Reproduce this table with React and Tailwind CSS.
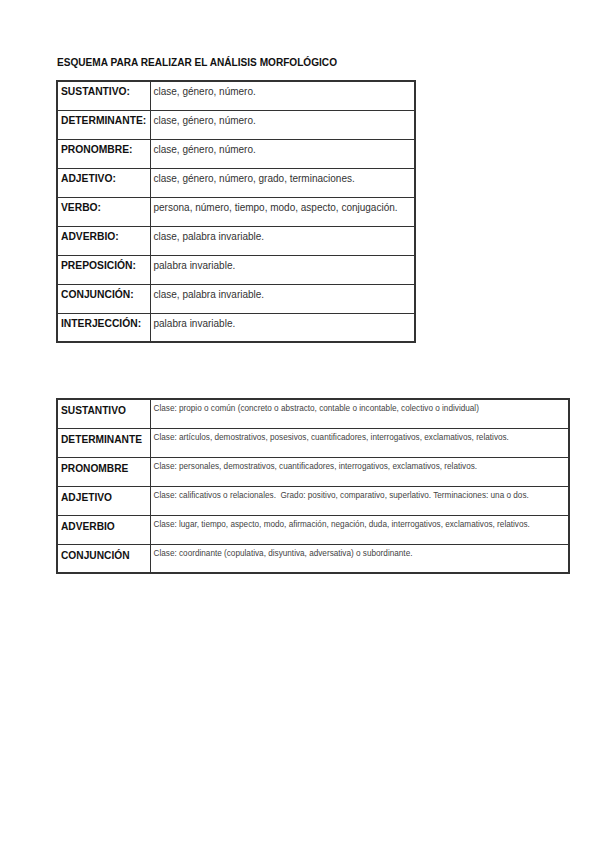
const FONT = { fontFamily: '"Liberation Sans", Arial, sans-serif' };

const SIMPLE = [
  ['SUSTANTIVO:', 'clase, género, número.'],
  ['DETERMINANTE:', 'clase, género, número.'],
  ['PRONOMBRE:', 'clase, género, número.'],
  ['ADJETIVO:', 'clase, género, número, grado, terminaciones.'],
  ['VERBO:', 'persona, número, tiempo, modo, aspecto, conjugación.'],
  ['ADVERBIO:', 'clase, palabra invariable.'],
  ['PREPOSICIÓN:', 'palabra invariable.'],
  ['CONJUNCIÓN:', 'clase, palabra invariable.'],
  ['INTERJECCIÓN:', 'palabra invariable.'],
];

const DETAIL = [
  ['SUSTANTIVO', 'Clase: propio o común (concreto o abstracto, contable o incontable, colectivo o individual)'],
  ['DETERMINANTE', 'Clase: artículos, demostrativos, posesivos, cuantificadores, interrogativos, exclamativos, relativos.'],
  ['PRONOMBRE', 'Clase: personales, demostrativos, cuantificadores, interrogativos, exclamativos, relativos.'],
  ['ADJETIVO', 'Clase: calificativos o relacionales.  Grado: positivo, comparativo, superlativo. Terminaciones: una o dos.'],
  ['ADVERBIO', 'Clase: lugar, tiempo, aspecto, modo, afirmación, negación, duda, interrogativos, exclamativos, relativos.'],
  ['CONJUNCIÓN', 'Clase: coordinante (copulativa, disyuntiva, adversativa) o subordinante.'],
];

export default function App() {
  return (
    <div className="w-[599px] h-[848px] bg-white text-black" style={FONT}>
      <div className="pl-[57px] pt-[57px]">
        <h1 className="text-[10.1px] leading-[12px] font-bold text-[#111]">
          ESQUEMA PARA REALIZAR EL ANÁLISIS MORFOLÓGICO
        </h1>
      </div>

      {/* primera tabla */}
      <table className="ml-[56px] mt-[11px] w-[360px] border-collapse border-2 border-[#333] table-fixed">
        <colgroup>
          <col className="w-[93px]" />
          <col />
        </colgroup>
        <tbody>
          {SIMPLE.map(([label, value]) => (
            <tr key={label} className="h-[29px]">
              <td className="border border-[#333] align-top pl-[3px] pt-[4px] text-[10.3px] leading-[12px] font-bold text-[#111] whitespace-nowrap">
                {label}
              </td>
              <td className="border border-[#333] align-top pl-[3px] pt-[4px] text-[10px] leading-[12px] text-[#333]">
                {value}
              </td>
            </tr>
          ))}
        </tbody>
      </table>

      {/* segunda tabla */}
      <table className="ml-[56px] mt-[55px] w-[514px] border-collapse border-2 border-[#333] table-fixed">
        <colgroup>
          <col className="w-[93px]" />
          <col />
        </colgroup>
        <tbody>
          {DETAIL.map(([label, value]) => (
            <tr key={label} className="h-[29px]">
              <td className="border border-[#333] align-top pl-[3px] pt-[4px] text-[10.2px] leading-[13px] font-bold text-[#111]">
                {label}
              </td>
              <td className="border border-[#333] align-top pl-[3px] pt-[4px] text-[8.2px] leading-[10px] text-[#444] whitespace-pre">
                {value}
              </td>
            </tr>
          ))}
        </tbody>
      </table>
    </div>
  );
}
